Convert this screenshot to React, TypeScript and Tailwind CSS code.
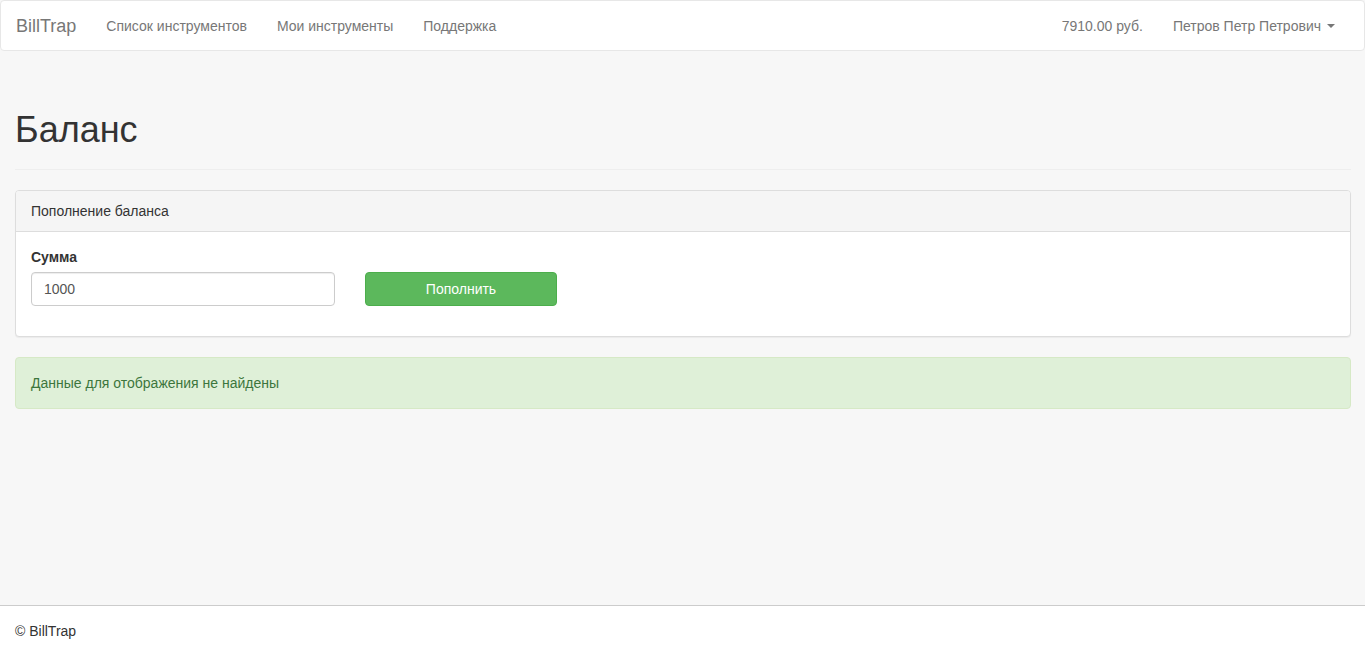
export default function App() {
  return (
    <div className="w-full h-[651px] overflow-hidden flex flex-col bg-[#f7f7f7] text-[14px] leading-[20px] text-[#333] font-['Liberation_Sans',Arial,sans-serif]">
      <nav className="h-[51px] shrink-0 flex items-center justify-between bg-white border border-[#e7e7e7] rounded-[4px]">
        <div className="flex items-center">
          <span className="px-[15px] text-[18px] leading-[20px] text-[#777]">BillTrap</span>
          {["Список инструментов", "Мои инструменты", "Поддержка"].map((item, index) => (
            <span key={index} className="px-[15px] text-[#777]">
              {item}
            </span>
          ))}
        </div>
        <div className="flex items-center pr-[14px]">
          <span className="px-[15px] text-[#777]">7910.00 руб.</span>
          <span className="px-[15px] text-[#777] flex items-center">
            Петров Петр Петрович
            <span className="ml-[6px] w-0 h-0 border-x-[4px] border-x-transparent border-t-[4px] border-t-[#777]" />
          </span>
        </div>
      </nav>

      <main className="h-[554px] shrink-0 pl-[15px] pr-[14px] pt-[59px]">
        <div className="pb-[9px] border-b border-[#eee] mb-[20px]">
          <h1 className="text-[36px] leading-[40px] font-normal mb-[10px] text-[#333]">Баланс</h1>
        </div>

        <div className="bg-white border border-[#ddd] rounded-[4px] shadow-[0_1px_1px_rgba(0,0,0,0.05)] mb-[20px]">
          <div className="px-[15px] py-[10px] bg-[#f5f5f5] border-b border-[#ddd] rounded-t-[3px]">
            Пополнение баланса
          </div>
          <div className="p-[15px]">
            <div className="font-bold mb-[5px]">Сумма</div>
            <div className="flex items-center gap-[30px] mb-[15px]">
              <div className="w-[304px] h-[34px] px-[12px] flex items-center bg-white border border-[#ccc] rounded-[4px] shadow-[inset_0_1px_1px_rgba(0,0,0,0.075)] text-[#555]">
                1000
              </div>
              <button className="w-[192px] h-[34px] bg-[#5cb85c] border border-[#4cae4c] rounded-[4px] text-white">
                Пополнить
              </button>
            </div>
          </div>
        </div>

        <div className="px-[15px] py-[15px] bg-[#dff0d8] border border-[#d6e9c6] rounded-[4px] text-[#3c763d]">
          Данные для отображения не найдены
        </div>
      </main>

      <footer className="shrink-0 bg-white border-t border-[#ccc] px-[15px] py-[15px]">
        © BillTrap
      </footer>
    </div>
  );
}
